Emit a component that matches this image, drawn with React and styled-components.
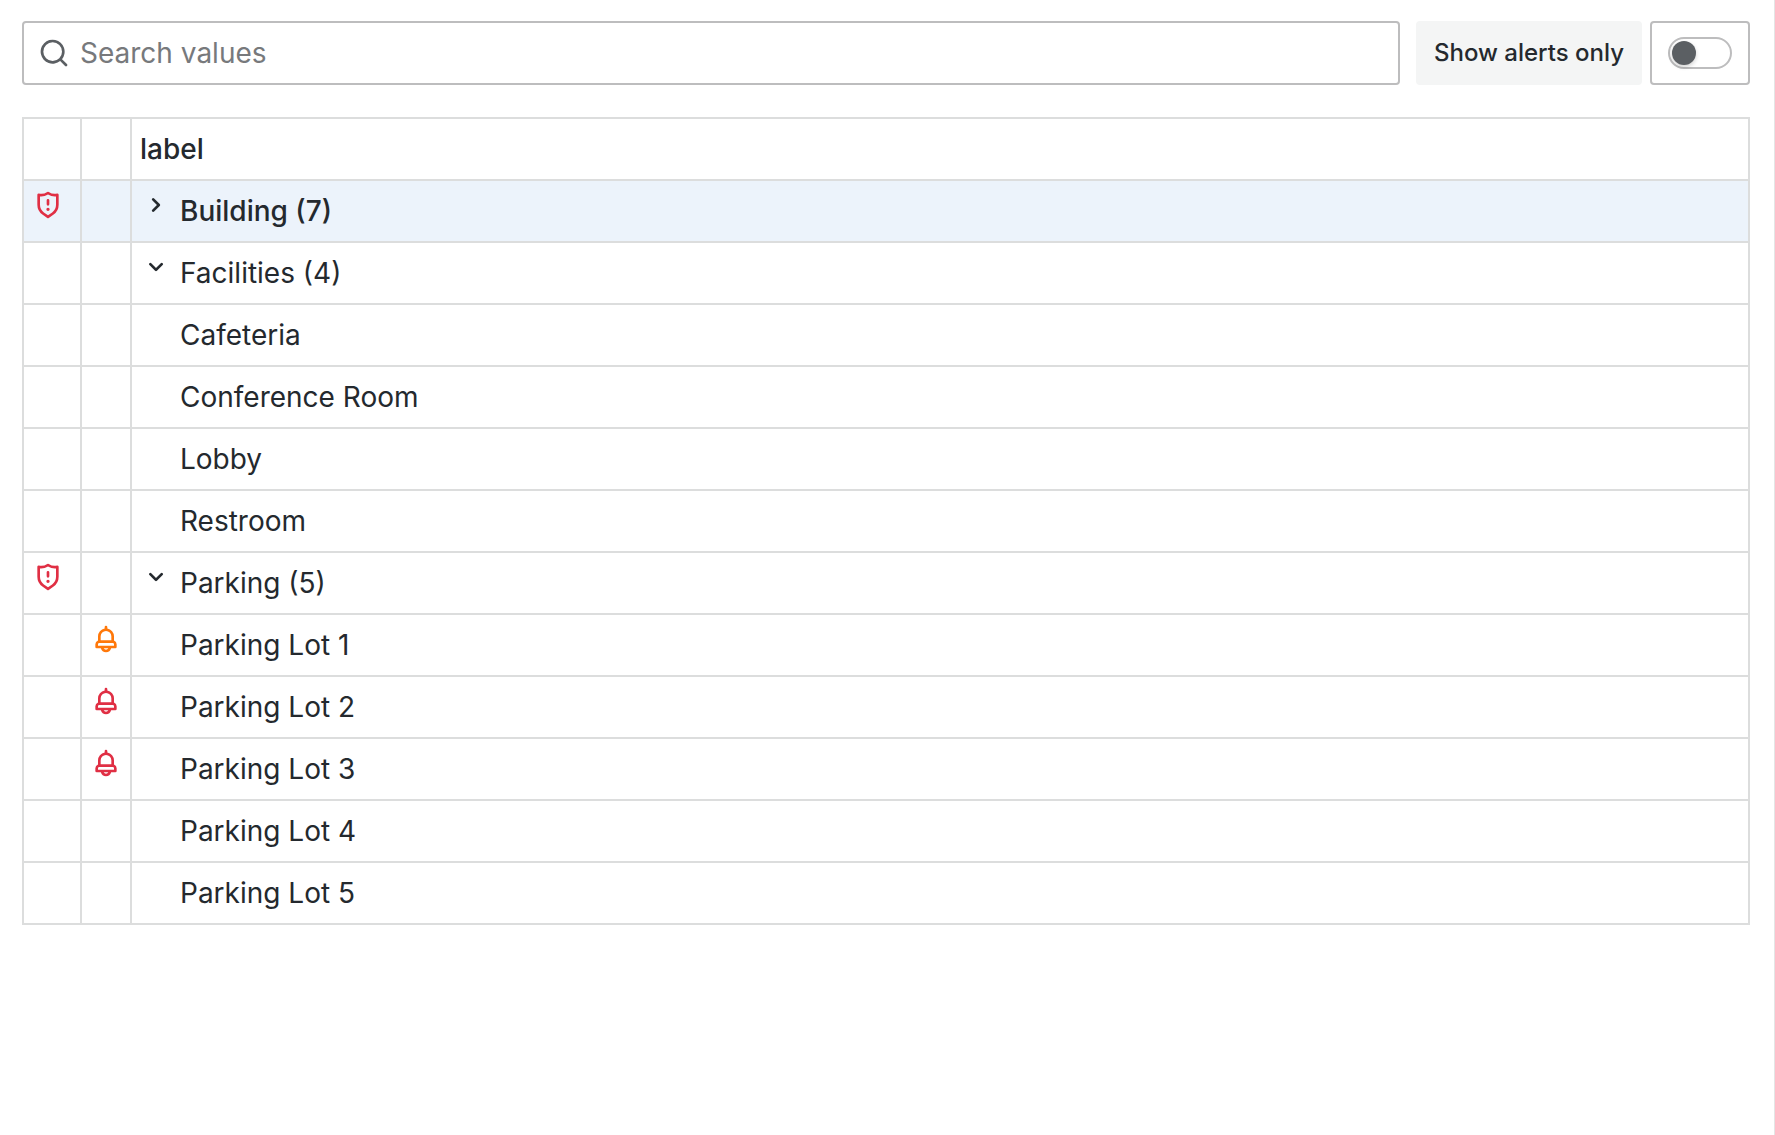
import React, { useState } from "react";
import styled, { createGlobalStyle, css } from "styled-components";

const color = {
  text: "#24292e",
  secondary: "#5b5f63",
  placeholder: "#77797c",
  inputBorder: "#bdbdbe",
  gridBorder: "#dcdddd",
  paneBorder: "#e4e5e5",
  muted: "#f4f5f5",
  selected: "#ecf3fb",
  critical: "#e02f44",
  warning: "#ff780a",
};

const GlobalStyle = createGlobalStyle`
  *, *::before, *::after { box-sizing: border-box; }
  body {
    margin: 0;
    background: #fff;
    color: ${color.text};
    font-family: Inter, "Liberation Sans", sans-serif;
    font-size: 28px;
    line-height: 44px;
  }
`;

const ICONS = {
  search:
    "M21.71,20.29,18,16.61A9,9,0,1,0,16.61,18l3.68,3.68a1,1,0,0,0,1.42,0A1,1,0,0,0,21.71,20.29ZM11,18a7,7,0,1,1,7-7A7,7,0,0,1,11,18Z",
  shield:
    "M12,14a1.25,1.25,0,1,0,1.25,1.25A1.25,1.25,0,0,0,12,14Zm0-1.5a1,1,0,0,0,1-1v-3a1,1,0,0,0-2,0v3A1,1,0,0,0,12,12.5ZM19.63,3.65a1,1,0,0,0-.84-.2,8,8,0,0,1-6.22-1.27,1,1,0,0,0-1.14,0A8,8,0,0,1,5.21,3.45a1,1,0,0,0-.84.2A1,1,0,0,0,4,4.43v7.45a9,9,0,0,0,3.77,7.33l3.65,2.6a1,1,0,0,0,1.16,0l3.65-2.6A9,9,0,0,0,20,11.88V4.43A1,1,0,0,0,19.63,3.65ZM18,11.88a7,7,0,0,1-2.93,5.7L12,19.77,8.93,17.58A7,7,0,0,1,6,11.88V5.58a10,10,0,0,0,6-1.39,10,10,0,0,0,6,1.39Z",
  bell:
    "M18,13.18V10a6,6,0,0,0-5-5.91V3a1,1,0,0,0-2,0V4.09A6,6,0,0,0,6,10v3.18A3,3,0,0,0,4,16v2a1,1,0,0,0,1,1H8.14a4,4,0,0,0,7.72,0H19a1,1,0,0,0,1-1V16A3,3,0,0,0,18,13.18ZM8,10a4,4,0,0,1,8,0v3H8Zm4,10a2,2,0,0,1-1.72-1h3.44A2,2,0,0,1,12,20Zm6-3H6V16a1,1,0,0,1,1-1H17a1,1,0,0,1,1,1Z",
  angleRight:
    "M14.83,11.29,10.59,7.05a1,1,0,0,0-1.42,0,1,1,0,0,0,0,1.41L12.71,12,9.17,15.54a1,1,0,0,0,0,1.41,1,1,0,0,0,.71.29,1,1,0,0,0,.71-.29l4.24-4.24A1,1,0,0,0,14.83,11.29Z",
  angleDown:
    "M17,9.17a1,1,0,0,0-1.41,0L12,12.71,8.46,9.17a1,1,0,0,0-1.41,0,1,1,0,0,0,0,1.42l4.24,4.24a1,1,0,0,0,1.42,0L17,10.59A1,1,0,0,0,17,9.17Z",
};

const Svg = styled.svg`
  display: block;
  flex: none;
  width: 32px;
  height: 32px;
  fill: ${(p) => p.$color || "currentColor"};
`;

const Icon = ({ name, tone }) => (
  <Svg viewBox="0 0 24 24" aria-hidden="true" $color={tone}>
    <path d={ICONS[name]} />
  </Svg>
);

const Pane = styled.main`
  min-height: 100vh;
  padding: 21px 24px 24px 22px;
  border-right: 1px solid ${color.paneBorder};
`;

const Toolbar = styled.div`
  display: flex;
  gap: 16px;
  margin-bottom: 32px;
`;

const field = css`
  display: flex;
  align-items: center;
  height: 64px;
  border: 2px solid ${color.inputBorder};
  border-radius: 4px;
`;

const SearchField = styled.label`
  ${field}
  flex: 1;
  gap: 10px;
  padding: 0 14px;
  color: ${color.secondary};
`;

const SearchInput = styled.input`
  flex: 1;
  min-width: 0;
  padding: 0;
  border: 0;
  outline: 0;
  background: transparent;
  color: ${color.text};
  font: inherit;
  &::placeholder {
    color: ${color.placeholder};
    opacity: 1;
  }
`;

const SwitchGroup = styled.div`
  display: flex;
  gap: 8px;
`;

const SwitchLabel = styled.label`
  display: flex;
  align-items: center;
  height: 64px;
  padding: 0 18px;
  border-radius: 4px;
  background: ${color.muted};
  font-size: 24px;
  font-weight: 500;
  white-space: nowrap;
`;

const SwitchBox = styled.div`
  ${field}
  padding: 0 16px;
`;

const Switch = styled.input`
  appearance: none;
  display: flex;
  align-items: center;
  width: 64px;
  height: 32px;
  margin: 0;
  padding: 0 2px;
  border: 2px solid ${color.inputBorder};
  border-radius: 16px;
  cursor: pointer;
  &::before {
    content: "";
    width: 24px;
    height: 24px;
    border-radius: 50%;
    background: ${color.secondary};
    box-shadow: 0 2px 4px rgba(24, 26, 27, 0.2);
  }
  &:checked {
    justify-content: flex-end;
  }
`;

const Table = styled.table`
  width: 100%;
  table-layout: fixed;
  border-collapse: collapse;
`;

const Col = styled.col`
  width: ${(p) => p.$width};
`;

const cell = css`
  height: 62px;
  padding: 8px;
  border: 2px solid ${color.gridBorder};
  text-align: left;
  vertical-align: top;
`;

const HeadCell = styled.th`
  ${cell}
  font-weight: 500;
`;

const Cell = styled.td`
  ${cell}
`;

const Row = styled.tr`
  background: ${(p) => (p.$selected ? color.selected : "transparent")};
  font-weight: ${(p) => (p.$selected ? 500 : 400)};
`;

const Label = styled.div`
  display: flex;
  align-items: flex-start;
  gap: 8px;
  padding-left: ${(p) => (p.$nested ? "40px" : "0")};
`;

const Toggle = styled.button`
  padding: 0;
  border: 0;
  background: none;
  color: inherit;
  cursor: pointer;
`;

const GROUPS = [
  {
    name: "Building",
    count: 7,
    alert: true,
    selected: true,
    items: [],
  },
  {
    name: "Facilities",
    count: 4,
    open: true,
    items: [
      { name: "Cafeteria" },
      { name: "Conference Room" },
      { name: "Lobby" },
      { name: "Restroom" },
    ],
  },
  {
    name: "Parking",
    count: 5,
    alert: true,
    open: true,
    items: [
      { name: "Parking Lot 1", tone: color.warning },
      { name: "Parking Lot 2", tone: color.critical },
      { name: "Parking Lot 3", tone: color.critical },
      { name: "Parking Lot 4" },
      { name: "Parking Lot 5" },
    ],
  },
];

function Group({ group, query, alertsOnly }) {
  const [open, setOpen] = useState(Boolean(group.open));
  const items = group.items.filter(
    (item) =>
      item.name.toLowerCase().includes(query.toLowerCase()) &&
      (!alertsOnly || item.tone)
  );
  if (alertsOnly && !group.alert) return null;

  return (
    <>
      <Row $selected={group.selected}>
        <Cell>{group.alert && <Icon name="shield" tone={color.critical} />}</Cell>
        <Cell />
        <Cell>
          <Label>
            <Toggle
              type="button"
              aria-expanded={open}
              aria-label={group.name}
              onClick={() => setOpen(!open)}
            >
              <Icon name={open ? "angleDown" : "angleRight"} />
            </Toggle>
            <span>{`${group.name} (${group.count})`}</span>
          </Label>
        </Cell>
      </Row>
      {open &&
        items.map((item) => (
          <Row key={item.name}>
            <Cell />
            <Cell>{item.tone && <Icon name="bell" tone={item.tone} />}</Cell>
            <Cell>
              <Label $nested>{item.name}</Label>
            </Cell>
          </Row>
        ))}
    </>
  );
}

export default function App() {
  const [query, setQuery] = useState("");
  const [alertsOnly, setAlertsOnly] = useState(false);

  return (
    <>
      <GlobalStyle />
      <Pane>
        <Toolbar>
          <SearchField htmlFor="search">
            <Icon name="search" />
            <SearchInput
              id="search"
              type="text"
              aria-label="Search values"
              placeholder="Search values"
              value={query}
              onChange={(e) => setQuery(e.target.value)}
            />
          </SearchField>
          <SwitchGroup>
            <SwitchLabel htmlFor="alerts-only">Show alerts only</SwitchLabel>
            <SwitchBox>
              <Switch
                id="alerts-only"
                type="checkbox"
                role="switch"
                checked={alertsOnly}
                onChange={(e) => setAlertsOnly(e.target.checked)}
              />
            </SwitchBox>
          </SwitchGroup>
        </Toolbar>
        <Table>
          <colgroup>
            <Col $width="58px" />
            <Col $width="50px" />
            <Col $width="auto" />
          </colgroup>
          <thead>
            <tr>
              <HeadCell scope="col" aria-label="Group alert" />
              <HeadCell scope="col" aria-label="Alert" />
              <HeadCell scope="col">label</HeadCell>
            </tr>
          </thead>
          <tbody>
            {GROUPS.map((group) => (
              <Group
                key={group.name}
                group={group}
                query={query}
                alertsOnly={alertsOnly}
              />
            ))}
          </tbody>
        </Table>
      </Pane>
    </>
  );
}
